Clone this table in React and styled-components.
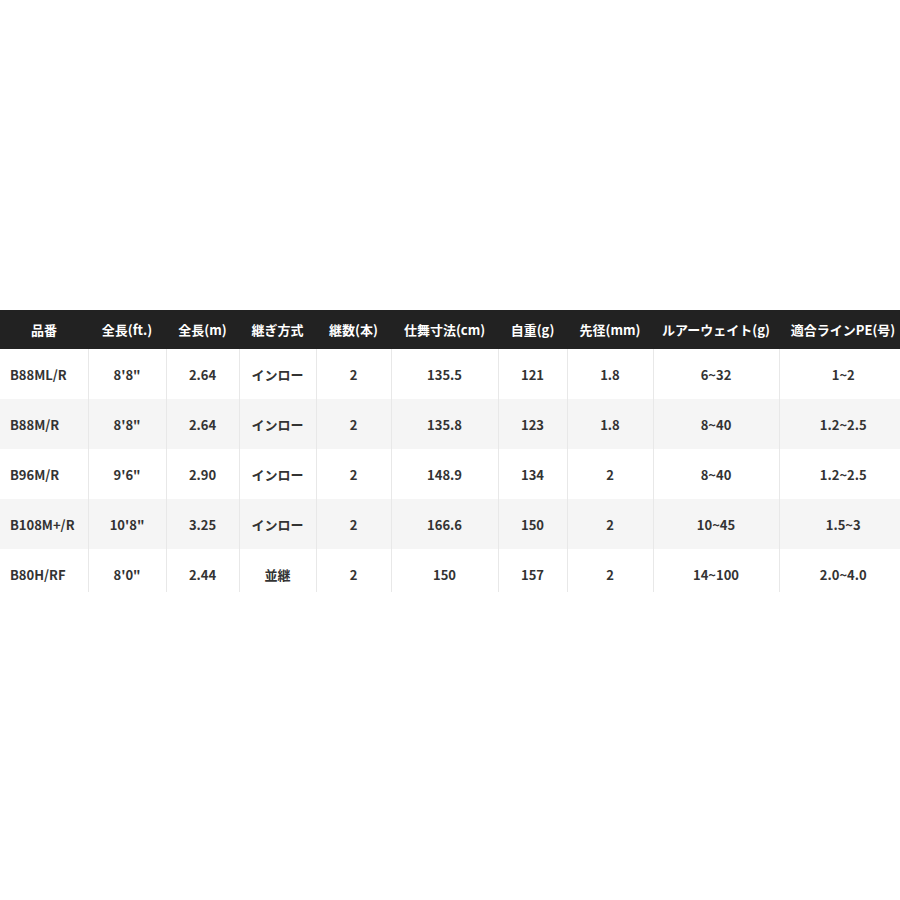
import React from 'react';
import styled, { createGlobalStyle } from 'styled-components';

const GlobalStyle = createGlobalStyle`
  body {
    margin: 0;
    background: #fff;
    font-family: "Noto Sans CJK JP", "Noto Sans", sans-serif;
  }
`;

const Page = styled.div`
  width: 900px;
  height: 900px;
  overflow: hidden;
  padding-top: 310px;
  box-sizing: border-box;
`;

const Table = styled.table`
  width: 907px;
  table-layout: fixed;
  border-collapse: collapse;
  font-size: 13px;
`;

const HeadCell = styled.th`
  height: 39px;
  padding: 0;
  background: #222;
  color: #fff;
  font-weight: 700;
  text-align: center;
  white-space: nowrap;
`;

const Row = styled.tr`
  background: ${p => (p.$odd ? '#f5f5f5' : '#fff')};
`;

// the last row is cut off by the picture's frame, so it is shorter
const Cell = styled.td`
  height: ${p => (p.$cut ? '27px' : '50px')};
  padding: ${p => (p.$cut ? '16px' : '0')} ${p => (p.$left ? '10px' : '0')} 0;
  vertical-align: ${p => (p.$cut ? 'top' : 'middle')};
  color: #333;
  font-weight: 700;
  text-align: ${p => (p.$left ? 'left' : 'center')};
  border-left: ${p => (p.$left ? 'none' : '1px solid #e8e8e8')};
  white-space: nowrap;
`;

const widths = [88, 78, 73, 77, 75, 107, 69, 86, 126, 128];

const heads = [
  '品番',
  '全長(ft.)',
  '全長(m)',
  '継ぎ方式',
  '継数(本)',
  '仕舞寸法(cm)',
  '自重(g)',
  '先径(mm)',
  'ルアーウェイト(g)',
  '適合ラインPE(号)',
];

const rows = [
  ['B88ML/R', `8'8"`, '2.64', 'インロー', '2', '135.5', '121', '1.8', '6~32', '1~2'],
  ['B88M/R', `8'8"`, '2.64', 'インロー', '2', '135.8', '123', '1.8', '8~40', '1.2~2.5'],
  ['B96M/R', `9'6"`, '2.90', 'インロー', '2', '148.9', '134', '2', '8~40', '1.2~2.5'],
  ['B108M+/R', `10'8"`, '3.25', 'インロー', '2', '166.6', '150', '2', '10~45', '1.5~3'],
  ['B80H/RF', `8'0"`, '2.44', '並継', '2', '150', '157', '2', '14~100', '2.0~4.0'],
];

export default function App() {
  return (
    <Page>
      <GlobalStyle />
      <Table>
        <colgroup>
          {widths.map((w, i) => (
            <col key={i} style={{ width: w }} />
          ))}
        </colgroup>
        <thead>
          <tr>
            {heads.map(h => (
              <HeadCell key={h}>{h}</HeadCell>
            ))}
          </tr>
        </thead>
        <tbody>
          {rows.map((r, i) => (
            <Row key={r[0]} $odd={i % 2 === 1}>
              {r.map((c, j) => (
                <Cell key={j} $left={j === 0} $cut={i === rows.length - 1}>
                  {c}
                </Cell>
              ))}
            </Row>
          ))}
        </tbody>
      </Table>
    </Page>
  );
}
